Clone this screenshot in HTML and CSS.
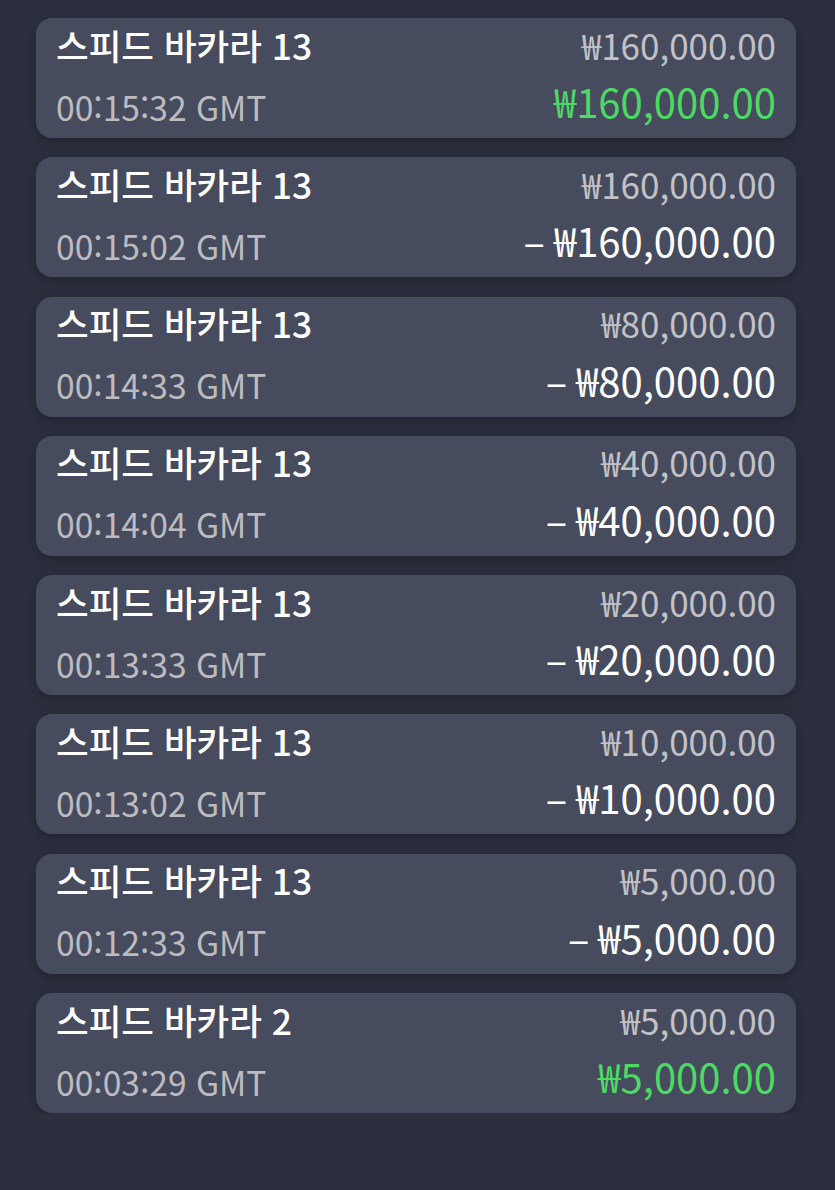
FILE: index.html
```html
<!DOCTYPE html>
<html lang="ko">
  <head>
    <meta charset="UTF-8" />
    <meta name="viewport" content="width=device-width, initial-scale=1.0" />
    <title>베팅 내역</title>
    <link rel="stylesheet" href="styles.css">
  </head>
  <body>
    <div class="list">
      <div class="bet">
        <div class="game">스피드 바카라 13</div>
        <div class="stake">₩160,000.00</div>
        <div class="time">00:15:32 GMT</div>
        <div class="result win">₩160,000.00</div>
      </div>
      <div class="bet">
        <div class="game">스피드 바카라 13</div>
        <div class="stake">₩160,000.00</div>
        <div class="time">00:15:02 GMT</div>
        <div class="result">– ₩160,000.00</div>
      </div>
      <div class="bet">
        <div class="game">스피드 바카라 13</div>
        <div class="stake">₩80,000.00</div>
        <div class="time">00:14:33 GMT</div>
        <div class="result">– ₩80,000.00</div>
      </div>
      <div class="bet">
        <div class="game">스피드 바카라 13</div>
        <div class="stake">₩40,000.00</div>
        <div class="time">00:14:04 GMT</div>
        <div class="result">– ₩40,000.00</div>
      </div>
      <div class="bet">
        <div class="game">스피드 바카라 13</div>
        <div class="stake">₩20,000.00</div>
        <div class="time">00:13:33 GMT</div>
        <div class="result">– ₩20,000.00</div>
      </div>
      <div class="bet">
        <div class="game">스피드 바카라 13</div>
        <div class="stake">₩10,000.00</div>
        <div class="time">00:13:02 GMT</div>
        <div class="result">– ₩10,000.00</div>
      </div>
      <div class="bet">
        <div class="game">스피드 바카라 13</div>
        <div class="stake">₩5,000.00</div>
        <div class="time">00:12:33 GMT</div>
        <div class="result">– ₩5,000.00</div>
      </div>
      <div class="bet">
        <div class="game">스피드 바카라 2</div>
        <div class="stake">₩5,000.00</div>
        <div class="time">00:03:29 GMT</div>
        <div class="result win">₩5,000.00</div>
      </div>
    </div>
  </body>
</html>
```

FILE: styles.css
```css
body {
  margin: 0;
  padding: 0;
  background-color: #2c2f3e;
  font-family: "Noto Sans CJK KR", "Noto Sans", sans-serif;
  color: #ffffff;
}
.list {
  display: flex;
  flex-direction: column;
  gap: 19.3px;
  padding: 18px 39px 0 36px;
}
.bet {
  display: grid;
  grid-template-columns: 1fr auto;
  grid-template-rows: 52px 62px;
  align-items: center;
  height: 120px;
  box-sizing: border-box;
  padding: 0 20px 6px 20px;
  background-color: #464b5d;
  border-radius: 16px;
  box-shadow: 0 4px 14px rgba(0, 0, 0, 0.25);
}
.game {
  font-size: 35.5px;
  font-weight: 500;
}
.stake {
  text-align: right;
  font-size: 35px;
  color: #c2c2c6;
}
.time {
  margin-top: 10px;
  font-size: 33.6px;
  color: #bcbcc0;
}
.result {
  text-align: right;
  font-size: 40px;
}
.win {
  color: #4cd964;
}
```
